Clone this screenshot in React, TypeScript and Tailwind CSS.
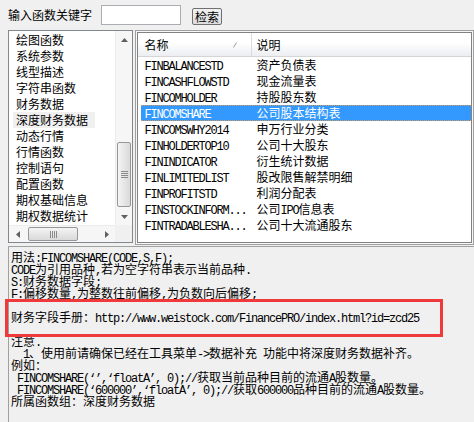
import React from 'react';

const groups = ['绘图函数', '系统参数', '线型描述', '字符串函数', '财务数据', '深度财务数据', '动态行情', '行情函数', '控制语句', '配置函数', '期权基础信息', '期权数据统计'];

const funcs: [string, string][] = [
  ['FINBALANCESTD', '资产负债表'],
  ['FINCASHFLOWSTD', '现金流量表'],
  ['FINCOMHOLDER', '持股股东数'],
  ['FINCOMSHARE', '公司股本结构表'],
  ['FINCOMSWHY2014', '申万行业分类'],
  ['FINHOLDERTOP10', '公司十大股东'],
  ['FININDICATOR', '衍生统计数据'],
  ['FINLIMITEDLIST', '股改限售解禁明细'],
  ['FINPROFITSTD', '利润分配表'],
  ['FINSTOCKINFORM...', '公司IPO信息表'],
  ['FINTRADABLESHA...', '公司十大流通股东'],
];

const help = [
  '用法:FINCOMSHARE(CODE,S,F);',
  'CODE为引用品种,若为空字符串表示当前品种.',
  'S:财务数据字段;',
  'F:偏移数量,为整数往前偏移,为负数向后偏移;',
  '',
  '财务字段手册：http://www.weistock.com/FinancePRO/index.html?id=zcd25',
  '',
  '注意.',
  '  1、使用前请确保已经在工具菜单->数据补充 功能中将深度财务数据补齐。',
  '例如：',
  ' FINCOMSHARE(‘’,‘floatA’, 0);//获取当前品种目前的流通A股数量。',
  ' FINCOMSHARE(‘600000’,‘floatA’, 0);//获取600000品种目前的流通A股数量。',
  '所属函数组：深度财务数据',
];

// half-width runs use the mono font, the rest falls on the CJK font
const Txt = ({ s }: { s: string }) => {
  const parts = s.split(/([\x20-\x7e‘’]+)/).filter((p) => p !== '');
  return (
    <>
      {parts.map((p, i) =>
        /^[\x20-\x7e‘’]+$/.test(p) ? (
          <span key={i} className="inline-block font-['Liberation_Mono',monospace] text-[12px] leading-[12px] tracking-[-1.2px]">
            {p}
          </span>
        ) : (
          <span key={i} className="inline-block leading-[12px]">{p}</span>
        )
      )}
    </>
  );
};

const Arrow = ({ dir }: { dir: 'up' | 'down' | 'left' | 'right' }) => {
  const pts = {
    up: '0,4 3.5,0 7,4',
    down: '0,0 3.5,4 7,0',
    left: '4,0 0,3.5 4,7',
    right: '0,0 4,3.5 0,7',
  }[dir];
  const w = dir === 'up' || dir === 'down' ? 7 : 4;
  const h = dir === 'up' || dir === 'down' ? 4 : 7;
  return (
    <div className="w-[17px] h-[17px] flex items-center justify-center shrink-0">
      <svg width={w} height={h} viewBox={`0 0 ${w} ${h}`}>
        <polygon points={pts} fill="#606060" />
      </svg>
    </div>
  );
};

const App: React.FC = () => {
  return (
    <main className="w-[474px] h-[422px] bg-[#f0f0f0] relative overflow-hidden text-black text-[12px] font-['Noto_Sans_CJK_SC',sans-serif]">
      <div className="flex items-start h-[29px] pl-[8px]">
        <span className="mt-[9px] leading-[12px]">输入函数关键字</span>
        <input className="ml-[9px] mt-[5px] w-[80px] h-[20px] bg-white border border-[#abadb3] outline-none" />
        <button className="ml-[11px] mt-[8px] w-[30px] h-[17px] rounded-[2px] border border-[#707070] bg-linear-to-b from-[#f2f2f2] to-[#dddddd] leading-[14px] text-[12px] flex items-center justify-center">
          检索
        </button>
      </div>

      <div className="flex items-start h-[217px]">
        {/* left list */}
        <div className="ml-[8px] mt-[1px] w-[126px] h-[213px] border border-[#828790] bg-white flex flex-col">
          <div className="flex h-[194px]">
            <div className="flex-1 pt-[1px] pl-[4px] overflow-hidden">
              {groups.map((g) => (
                <div key={g} className="h-[16px] leading-[16px]">
                  <span className={`inline-block h-[16px] pl-[3px] pr-[7px] ${g === '深度财务数据' ? 'bg-[#f0f0f0]' : ''}`}>{g}</span>
                </div>
              ))}
            </div>
            <div className="w-[17px] flex flex-col bg-[#f6f6f6] border-l border-[#ececec]">
              <Arrow dir="up" />
              <div className="flex-1" />
              <div className="h-[65px] mb-[1px] mx-[1px] rounded-[2px] border border-[#979797] bg-linear-to-r from-[#f4f4f4] to-[#d9d9d9] flex flex-col items-center justify-center gap-[1px]">
                <div className="w-[7px] h-[1px] bg-[#8a8a8a]" />
                <div className="w-[7px] h-[1px] bg-[#8a8a8a]" />
                <div className="w-[7px] h-[1px] bg-[#8a8a8a]" />
                <div className="w-[7px] h-[1px] bg-[#8a8a8a]" />
              </div>
              <Arrow dir="down" />
            </div>
          </div>
          <div className="flex h-[17px]">
            <div className="flex-1 flex bg-[#f6f6f6] border-t border-[#ececec]">
              <Arrow dir="left" />
              <div className="ml-[2px] my-[1px] w-[50px] rounded-[2px] border border-[#979797] bg-linear-to-b from-[#f4f4f4] to-[#d9d9d9] flex items-center justify-center gap-[1px]">
                <div className="w-[1px] h-[7px] bg-[#8a8a8a]" />
                <div className="w-[1px] h-[7px] bg-[#8a8a8a]" />
                <div className="w-[1px] h-[7px] bg-[#8a8a8a]" />
                <div className="w-[1px] h-[7px] bg-[#8a8a8a]" />
              </div>
              <div className="flex-1" />
              <Arrow dir="right" />
            </div>
            <div className="w-[17px] bg-[#f0f0f0]" />
          </div>
        </div>

        {/* function list */}
        <div className="ml-[2px] mt-[1px] w-[340px] h-[215px] border border-[#a0a0a0] p-[1px] bg-[#f7f7f7]">
          <div className="h-full border border-[#828282] bg-white">
            <div className="flex h-[24px] border-b border-[#d5d5d5] bg-linear-to-b from-white from-40% to-[#eceef1]">
              <div className="w-[114px] border-r border-[#dcdcdc] pl-[6px] flex items-center">
                <span className="leading-[12px]">名称</span>
                <svg className="ml-auto mr-[14px]" width="4" height="6" viewBox="0 0 4 6">
                  <line x1="0.5" y1="5.5" x2="3.5" y2="0.5" stroke="#9a9a9a" />
                </svg>
              </div>
              <div className="pl-[4px] flex items-center">
                <span className="leading-[12px]">说明</span>
              </div>
            </div>
            {funcs.map(([name, desc]) => {
              const sel = name === 'FINCOMSHARE';
              return (
                <div
                  key={name}
                  className={`ml-[3px] flex items-center h-[16px] whitespace-pre ${sel ? 'bg-[#3399ff] text-white border-y border-dotted border-[#d79a55]' : ''}`}
                >
                  <div className="w-[110px] pl-[3px] h-[12px] leading-[12px]">
                    <Txt s={name} />
                  </div>
                  <div className="pl-[5px] h-[12px] leading-[12px]">
                    <Txt s={desc} />
                  </div>
                </div>
              );
            })}
          </div>
        </div>
      </div>

      {/* help text */}
      <div className="ml-[8px] h-[176px] border-l border-t border-[#a0a0a0] pt-[4px] pl-[2px]">
        {help.map((l, i) => (
          <div key={i} className="h-[12px] leading-[12px] whitespace-pre">
            <Txt s={l} />
          </div>
        ))}
      </div>

      <div className="absolute left-[5px] top-[299px] w-[438px] h-[38px] border-[3px] border-[#ee3a3a]" />
    </main>
  );
};

export default App;
